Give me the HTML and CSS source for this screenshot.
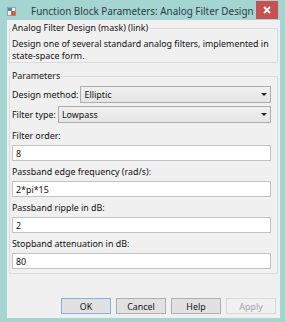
FILE: index.html
```html
<!DOCTYPE html>
<html lang="en">
<head>
  <meta charset="UTF-8">
  <title>Function Block Parameters: Analog Filter Design</title>
  <link rel="stylesheet" href="styles.css">
</head>
<body>
  <div class="window">
    <div class="titlebar">
      <svg class="app-icon" width="9" height="9" viewBox="0 0 9 9">
        <rect x="0.5" y="0.5" width="8" height="8" fill="#eef3f8" stroke="#8fa6bd"/>
        <rect x="1" y="1" width="4" height="3" fill="#4a86c8"/>
        <rect x="4" y="4" width="4.5" height="4.5" fill="#e2572c"/>
      </svg>
      <span class="title">Function Block Parameters: Analog Filter Design</span>
      <div class="close">
        <svg width="8" height="8" viewBox="0 0 8 8">
          <path d="M1 1 L7 7 M7 1 L1 7" stroke="#fff" stroke-width="1.8"/>
        </svg>
      </div>
    </div>

    <div class="client">
      <fieldset class="group group-info">
        <legend>Analog Filter Design (mask) (link)</legend>
        <p class="desc">Design one of several standard analog filters, implemented in<br>state-space form.</p>
      </fieldset>

      <fieldset class="group group-params">
        <legend>Parameters</legend>

        <div class="combo-row">
          <span class="label">Design method:</span>
          <div class="combo"><span>Elliptic</span><span class="arrow"></span></div>
        </div>
        <div class="combo-row">
          <span class="label">Filter type:</span>
          <div class="combo"><span>Lowpass</span><span class="arrow"></span></div>
        </div>

        <div class="field">
          <span class="label">Filter order:</span>
          <div class="input">8</div>
        </div>
        <div class="field">
          <span class="label">Passband edge frequency (rad/s):</span>
          <div class="input">2*pi*15</div>
        </div>
        <div class="field">
          <span class="label">Passband ripple in dB:</span>
          <div class="input">2</div>
        </div>
        <div class="field">
          <span class="label">Stopband attenuation in dB:</span>
          <div class="input">80</div>
        </div>
      </fieldset>

      <div class="buttons">
        <button class="default">OK</button>
        <button>Cancel</button>
        <button>Help</button>
        <button class="disabled">Apply</button>
      </div>
    </div>
  </div>
</body>
</html>
```

FILE: styles.css
```css
body {
  margin: 0;
  font-family: 'Noto Sans', 'Liberation Sans', sans-serif;
  background: #ffffff;
}

.window {
  width: 285px;
  height: 322px;
  background: #a4d5d1;
  box-sizing: border-box;
  padding: 0 5px 4px 7px;
  display: flex;
  flex-direction: column;
}

.titlebar {
  height: 20px;
  display: flex;
  align-items: center;
  flex-shrink: 0;
}

.app-icon {
  margin-top: 2px;
  flex-shrink: 0;
}

.title {
  margin-left: 15px;
  font-size: 9.9px;
  color: #2c3b48;
  white-space: nowrap;
  overflow: hidden;
  margin-top: 1px;
}

.close {
  flex-shrink: 0;
  margin-left: auto;
  margin-right: 2px;
  align-self: flex-start;
  margin-top: 1px;
  width: 22px;
  height: 18px;
  background: #c75050;
  display: flex;
  align-items: center;
  justify-content: center;
}

.client {
  flex: 1;
  background: #f0f0f0;
  display: flex;
  flex-direction: column;
  padding: 1px 2px 0 2px;
  font-size: 8.9px;
  color: #111111;
}

.group {
  margin: 0;
  border: 1px solid #dcdcdc;
  padding: 0 6px 0 2px;
  min-width: 0;
}

.group legend {
  padding: 0 1px;
  margin-left: -1px;
  line-height: 14px;
  font-size: 8.9px;
}

.group-info {
  padding-top: 3px;
}

.desc {
  margin: 0;
  line-height: 12px;
  white-space: nowrap;
}

.group-params {
  margin-top: 6px;
  padding-top: 2px;
  padding-bottom: 4px;
}

.combo-row {
  display: flex;
  align-items: center;
  height: 18px;
  margin-bottom: 2px;
}

.combo-row .label {
  margin-right: 2px;
  white-space: nowrap;
}

.combo {
  flex: 1;
  height: 17px;
  box-sizing: border-box;
  border: 1px solid #acacac;
  background: linear-gradient(#f0f0f0, #e5e5e5);
  display: flex;
  align-items: center;
  padding: 0 3px 0 3px;
}

.arrow {
  margin-left: auto;
  width: 0;
  height: 0;
  border-left: 3px solid transparent;
  border-right: 3px solid transparent;
  border-top: 3px solid #222;
}

.field {
  display: flex;
  flex-direction: column;
  gap: 2px;
  margin-top: 6px;
}

.field .label {
  line-height: 14px;
}

.field + .field {
  margin-top: 4px;
}

.input {
  height: 16px;
  box-sizing: border-box;
  border: 1px solid #c2c2c2;
  background: #ffffff;
  padding: 0 3px;
  display: flex;
  align-items: center;
}

.buttons {
  margin-top: auto;
  margin-bottom: 4px;
  display: flex;
  justify-content: flex-end;
  gap: 5px;
  padding-right: 2px;
}

button {
  width: 50px;
  height: 16px;
  padding: 0;
  font-family: inherit;
  font-size: 8.9px;
  color: #111111;
  background: #e1e1e1;
  border: 1px solid #adadad;
}

button.default {
  border-color: #7eb4ea;
}

button.disabled {
  color: #a2a2a2;
  background: #f0f0f0;
  border-color: #d9d9d9;
}
```
